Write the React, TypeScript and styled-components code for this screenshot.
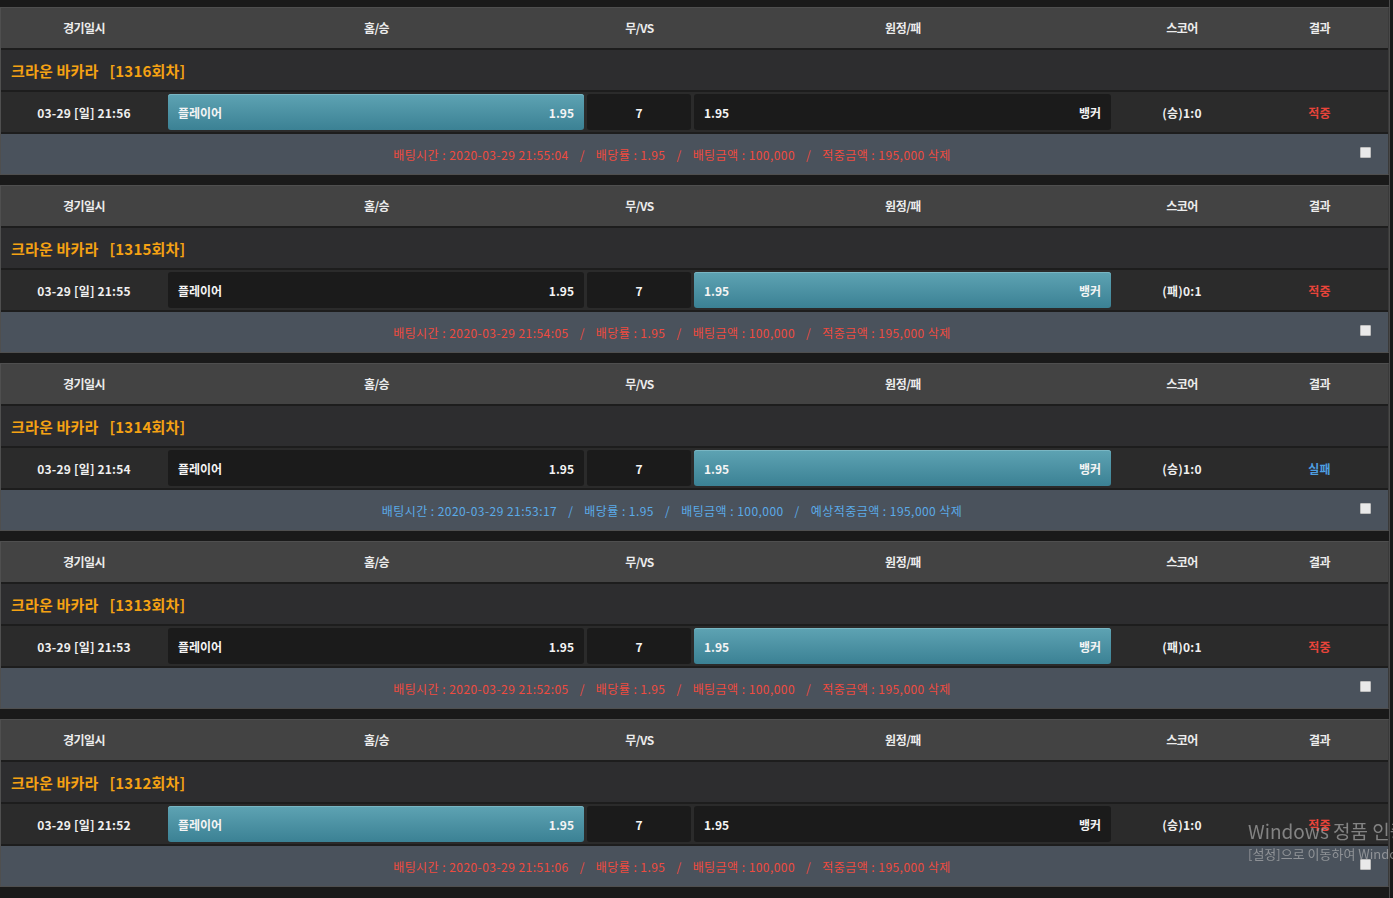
import styled, { createGlobalStyle } from "styled-components";

const GlobalStyle = createGlobalStyle`
  html, body {
    margin: 0;
    padding: 0;
    height: 100%;
    overflow: hidden;
    background: #1a1a1a;
  }
  body {
    font-family: "Noto Sans CJK KR", "Noto Sans", "Liberation Sans", sans-serif;
  }
`;

const Page = styled.div`
  width: 1390px;
  height: 898px;
  padding-top: 7px;
  box-sizing: border-box;
  border-right: 1px solid #4a4a4a;
`;

const Block = styled.section`
  display: flex;
  flex-direction: column;
  gap: 2px;
  background: #1d1d1d;
  border: 1px solid #4f4f4f;
  border-right-color: #3a3a3a;
  margin-bottom: 10px;
`;

const cols = "166px 419px 107px 420px 138px 1fr";

const HeaderRow = styled.div`
  display: grid;
  grid-template-columns: ${cols};
  height: 40px;
  align-items: center;
  background: #434343;
  color: #ececec;
  font-size: 12px;
  font-weight: 700;
  letter-spacing: -0.5px;
  text-align: center;
  line-height: 38px;
`;

const TitleRow = styled.div`
  display: flex;
  align-items: center;
  height: 40px;
  padding-left: 10px;
  background: #2d2d2f;
  color: #f5a213;
  font-size: 15px;
  font-weight: 700;
  letter-spacing: 0.2px;
  white-space: pre;
`;

const GameRow = styled.div`
  display: grid;
  grid-template-columns: ${cols};
  height: 40px;
  align-items: center;
  background: #2b2b2b;
  color: #f0f0f0;
  font-size: 12px;
  font-weight: 700;
`;

const Cell = styled.div<{ $color?: string }>`
  text-align: center;
  color: ${(p) => p.$color || "#f0f0f0"};
  letter-spacing: 0.2px;
`;

const Pick = styled.div<{ $on?: boolean; $center?: boolean }>`
  display: flex;
  align-items: center;
  justify-content: ${(p) => (p.$center ? "center" : "space-between")};
  height: 36px;
  margin: 0 2px 0 1px;
  padding: 0 10px;
  border-radius: 3px;
  background: ${(p) =>
    p.$on ? "linear-gradient(#5ea3b3, #3b8194)" : "#1b1b1b"};
  box-shadow: ${(p) => (p.$on ? "inset 0 1px 0 #79b6c3" : "none")};
  color: #f4f4f4;
`;

const BetRow = styled.div<{ $color: string }>`
  display: flex;
  align-items: center;
  height: 40px;
  background: #4a525c;
  color: ${(p) => p.$color};
  font-size: 12px;
`;

const BetText = styled.div`
  flex: 1;
  text-align: center;
  letter-spacing: 0.45px;
  white-space: pre;
`;

const Slash = styled.span`
  margin: 0 11px;
`;

const CheckCell = styled.div`
  width: 45px;
  display: flex;
  justify-content: center;
`;

const Check = styled.input`
  appearance: none;
  width: 11px;
  height: 11px;
  margin: 0 0 4px;
  border: 1px solid #bdbdbd;
  border-radius: 1px;
  background: #e9e9e9;
`;

const Watermark = styled.div`
  position: fixed;
  left: 1248px;
  top: 818px;
  white-space: nowrap;
  color: rgba(190, 190, 190, 0.6);
  font-family: "Noto Sans CJK KR", sans-serif;
  pointer-events: none;
`;

const WmTitle = styled.div`
  font-size: 19px;
  line-height: 26px;
`;

const WmSub = styled.div`
  font-size: 13px;
  line-height: 20px;
`;

type Game = {
  round: number;
  time: string;
  side: "home" | "away";
  score: string;
  win: boolean;
  betTime: string;
};

const games: Game[] = [
  { round: 1316, time: "21:56", side: "home", score: "(승)1:0", win: true, betTime: "21:55:04" },
  { round: 1315, time: "21:55", side: "away", score: "(패)0:1", win: true, betTime: "21:54:05" },
  { round: 1314, time: "21:54", side: "away", score: "(승)1:0", win: false, betTime: "21:53:17" },
  { round: 1313, time: "21:53", side: "away", score: "(패)0:1", win: true, betTime: "21:52:05" },
  { round: 1312, time: "21:52", side: "home", score: "(승)1:0", win: true, betTime: "21:51:06" },
];

const RED = "#ef4b3f";
const BLUE = "#5aaae8";

function GameBlock({ g }: { g: Game }) {
  const color = g.win ? RED : BLUE;
  return (
    <Block>
      <HeaderRow>
        <div>경기일시</div>
        <div>홈/승</div>
        <div>무/VS</div>
        <div>원정/패</div>
        <div>스코어</div>
        <div>결과</div>
      </HeaderRow>
      <TitleRow>{`크라운 바카라   [${g.round}회차]`}</TitleRow>
      <GameRow>
        <Cell>03-29 [일] {g.time}</Cell>
        <Pick $on={g.side === "home"}>
          <span>플레이어</span>
          <span>1.95</span>
        </Pick>
        <Pick $center>7</Pick>
        <Pick $on={g.side === "away"}>
          <span>1.95</span>
          <span>뱅커</span>
        </Pick>
        <Cell>{g.score}</Cell>
        <Cell $color={g.win ? "#e8443a" : "#4e9fe2"}>{g.win ? "적중" : "실패"}</Cell>
      </GameRow>
      <BetRow $color={color}>
        <BetText>
          {`배팅시간 : 2020-03-29 ${g.betTime}`}
          <Slash>/</Slash>
          배당률 : 1.95
          <Slash>/</Slash>
          배팅금액 : 100,000
          <Slash>/</Slash>
          {`${g.win ? "적중금액" : "예상적중금액"} : 195,000 삭제`}
        </BetText>
        <CheckCell>
          <Check type="checkbox" />
        </CheckCell>
      </BetRow>
    </Block>
  );
}

export default function App() {
  return (
    <>
      <GlobalStyle />
      <Page>
        {games.map((g) => (
          <GameBlock key={g.round} g={g} />
        ))}
      </Page>
      <Watermark>
        <WmTitle>Windows 정품 인증</WmTitle>
        <WmSub>[설정]으로 이동하여 Windows를 정품 인증합니다.</WmSub>
      </Watermark>
    </>
  );
}
